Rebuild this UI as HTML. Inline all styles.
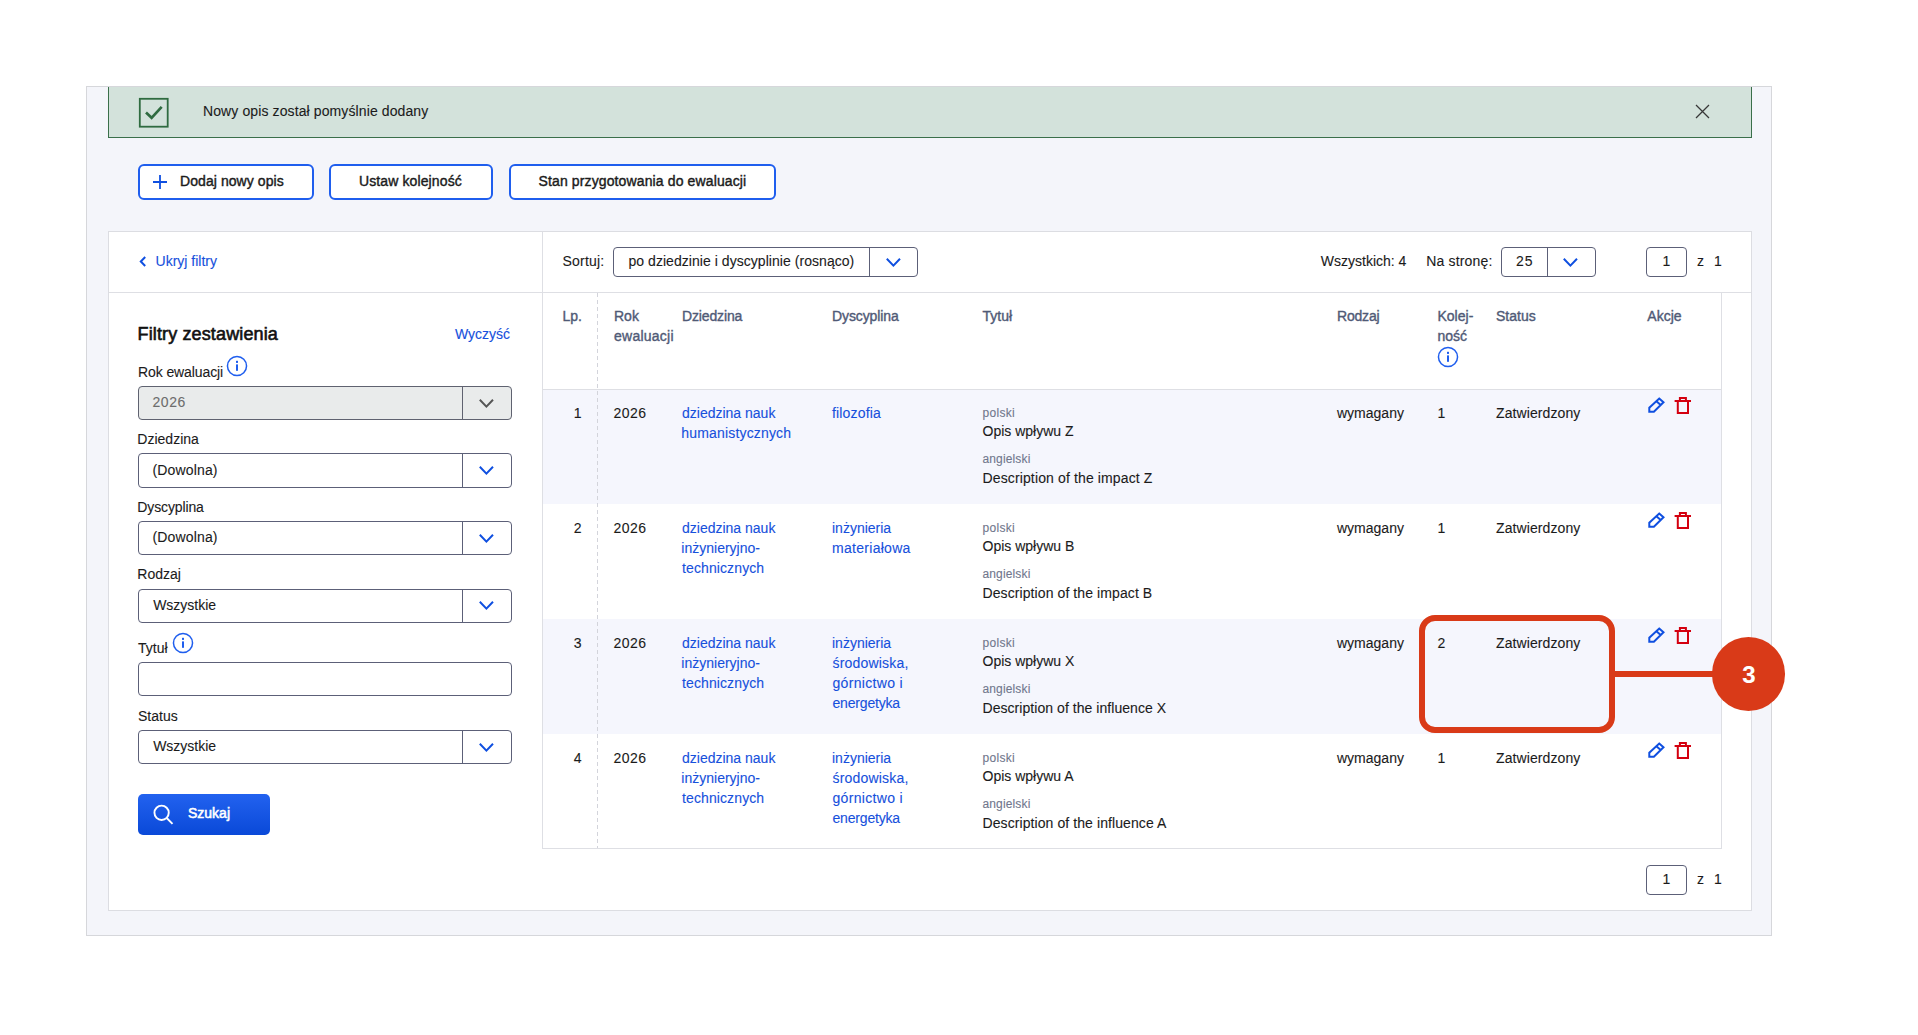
<!DOCTYPE html><html lang="pl"><head><meta charset="utf-8"><title>Opisy wpływu</title><style>
*{box-sizing:border-box;margin:0;padding:0}
html,body{width:1918px;height:1035px;background:#fff;overflow:hidden}
body{position:relative;font-family:"Liberation Sans",Arial,sans-serif;font-size:14px;line-height:20px;color:#1b1b1b}
.abs,.t{position:absolute}
.t{white-space:nowrap;line-height:20px;-webkit-text-stroke:0.1px currentColor}
a{color:#1650dc;text-decoration:none}
.frame{position:absolute;left:86px;top:86px;width:1686px;height:850px;background:#f4f5fa;border:1px solid #d6d7db;overflow:hidden}
.alert{position:absolute;left:108px;top:87px;width:1644px;height:51px;background:#d3e2db;border:1px solid #3a6f4a;border-top:0}
.btn{position:absolute;top:164px;height:36px;border:2px solid #1f5eee;border-radius:6px;background:#fff;font-weight:bold;color:#1b1b1b}
.panel{position:absolute;left:108px;top:231px;width:1644px;height:680px;background:#fff;border:1px solid #dcdde2}
.hline{position:absolute;height:1px;background:#dedfe4}
.vline{position:absolute;width:1px;background:#dedfe4}
.sel{position:absolute;border:1px solid #5c6078;border-radius:4px;background:#fff}
.sel .dv{position:absolute;top:0;bottom:0;width:1px;background:#5c6078}
.sel.dis{background:#e9ebeb;border-color:#5f6270;color:#6b6b6b}
.sel.dis .dv{background:#5f6270}
.lbl{color:#1b1b1b}
.blue{color:#1650dc}
.th{color:#505a76;-webkit-text-stroke:0.38px #505a76}
.md{-webkit-text-stroke:0.4px currentColor}
.sm{font-size:12px;line-height:16px;color:#70768c}
.row{position:absolute;left:543px;width:1178px}
.row.alt{background:#f5f6fd}
.ico{position:absolute;overflow:visible}
</style></head><body>
<div class="frame"></div>
<div class="alert" role="alert">
</div>
<svg class="ico" style="left:138px;top:96.5px" width="32" height="32" viewBox="0 0 32 32"><rect x="1.8" y="1.8" width="27.9" height="27.9" fill="none" stroke="#2f6b40" stroke-width="1.8"/><path d="M8 15.6 L13.6 20.8 L23.7 9.8" fill="none" stroke="#2f6b40" stroke-width="2.7"/></svg>
<span class="t " id="alerttxt" style="left:203.0px;top:101px;letter-spacing:0.109px;">Nowy opis został pomyślnie dodany</span>
<svg class="ico" style="left:1694px;top:103px" width="17" height="17" viewBox="0 0 17 17"><path d="M2 2 L15 15 M15 2 L2 15" stroke="#383838" stroke-width="1.25" fill="none"/></svg>
<button class="btn" style="left:138px;width:176px"></button>
<svg class="ico" style="left:152px;top:174px" width="16" height="16" viewBox="0 0 16 16"><path d="M8 1 V15 M1 8 H15" stroke="#0f4fe0" stroke-width="1.8" fill="none"/></svg>
<span class="t md" id="b1" style="left:180.0px;top:171px;letter-spacing:0.071px;">Dodaj nowy opis</span>
<button class="btn" style="left:329px;width:164px"></button>
<span class="t md" id="b2" style="left:359px;top:171px;letter-spacing:0.114px;">Ustaw kolejność</span>
<button class="btn" style="left:508.5px;width:267.5px"></button>
<span class="t md" id="b3" style="left:538.5px;top:171px;letter-spacing:0.127px;">Stan przygotowania do ewaluacji</span>
<div class="panel"></div>
<div class="hline" style="left:109px;top:292px;width:1642px"></div>
<div class="vline" style="left:542px;top:232px;height:617px"></div>
<svg class="ico" style="left:139px;top:256px" width="8" height="11" viewBox="0 0 8 11"><path d="M6.2 1 L1.8 5.5 L6.2 10" fill="none" stroke="#0f4fe0" stroke-width="2"/></svg>
<a class="t blue" id="ukryj" style="left:155.52px;top:251px;">Ukryj filtry</a>
<span class="t " id="filtry" style="left:137.52px;top:322px;letter-spacing:0.135px;font-size:18px;line-height:24px;-webkit-text-stroke:0.6px #111;color:#111;">Filtry zestawienia</span>
<a class="t blue" id="wyczysc" style="left:455px;top:324px;">Wyczyść</a>
<span class="t " id="l_rok" style="left:138px;top:361.5px;letter-spacing:-0.1px;">Rok ewaluacji</span>
<svg class="ico" style="left:226px;top:354.8px" width="22" height="22" viewBox="-11 -11 22 22"><circle cx="0" cy="0" r="9.55" fill="#fff" stroke="#1f5eee" stroke-width="1.5"/><rect x="-1" y="-1.6" width="2" height="6.4" fill="#1f5eee"/><rect x="-1" y="-5.2" width="2" height="2.1" fill="#1f5eee"/></svg>
<div class="sel dis" style="left:138px;top:386px;width:373.5px;height:34px"><span class="dv" style="left:323px"></span></div><span class="t " id="s_rok" style="left:152.5px;top:392.0px;letter-spacing:0.533px;color:#6d6d6d;">2026</span><svg class="ico" style="left:476.6px;top:396.7px" width="18.8" height="12.6" viewBox="-2 -2 18.8 12.6"><path d="M0.8 0.8 L7.4 7.6 L14.0 0.8" fill="none" stroke="#555" stroke-width="2.0" stroke-linecap="butt" stroke-linejoin="miter"/></svg>
<span class="t " id="l_dz" style="left:137.36px;top:429px;">Dziedzina</span>
<div class="sel" style="left:138px;top:453px;width:373.5px;height:35px"><span class="dv" style="left:323px"></span></div><span class="t " id="s_dz" style="left:152.5px;top:459.5px;letter-spacing:0.15px;">(Dowolna)</span><svg class="ico" style="left:476.6px;top:464.2px" width="18.8" height="12.6" viewBox="-2 -2 18.8 12.6"><path d="M0.8 0.8 L7.4 7.6 L14.0 0.8" fill="none" stroke="#0f4fe0" stroke-width="2.0" stroke-linecap="butt" stroke-linejoin="miter"/></svg>
<span class="t " id="l_dy" style="left:137.36px;top:496.5px;letter-spacing:-0.133px;">Dyscyplina</span>
<div class="sel" style="left:138px;top:521px;width:373.5px;height:34px"><span class="dv" style="left:323px"></span></div><span class="t " id="s_dy" style="left:152.5px;top:527.0px;letter-spacing:0.15px;">(Dowolna)</span><svg class="ico" style="left:476.6px;top:531.7px" width="18.8" height="12.6" viewBox="-2 -2 18.8 12.6"><path d="M0.8 0.8 L7.4 7.6 L14.0 0.8" fill="none" stroke="#0f4fe0" stroke-width="2.0" stroke-linecap="butt" stroke-linejoin="miter"/></svg>
<span class="t " id="l_ro" style="left:137.36px;top:564px;">Rodzaj</span>
<div class="sel" style="left:138px;top:588.5px;width:373.5px;height:34px"><span class="dv" style="left:323px"></span></div><span class="t " id="s_ro" style="left:153.14px;top:594.5px;">Wszystkie</span><svg class="ico" style="left:476.6px;top:599.2px" width="18.8" height="12.6" viewBox="-2 -2 18.8 12.6"><path d="M0.8 0.8 L7.4 7.6 L14.0 0.8" fill="none" stroke="#0f4fe0" stroke-width="2.0" stroke-linecap="butt" stroke-linejoin="miter"/></svg>
<span class="t " id="l_ty" style="left:138px;top:638px;">Tytuł</span>
<svg class="ico" style="left:171.7px;top:632px" width="22" height="22" viewBox="-11 -11 22 22"><circle cx="0" cy="0" r="9.55" fill="#fff" stroke="#1f5eee" stroke-width="1.5"/><rect x="-1" y="-1.6" width="2" height="6.4" fill="#1f5eee"/><rect x="-1" y="-5.2" width="2" height="2.1" fill="#1f5eee"/></svg>
<div class="sel" style="left:138px;top:662px;width:373.5px;height:34px"></div>
<span class="t " id="l_st" style="left:138px;top:705.5px;">Status</span>
<div class="sel" style="left:138px;top:730px;width:373.5px;height:34px"><span class="dv" style="left:323px"></span></div><span class="t " id="s_st" style="left:153.14px;top:736.0px;">Wszystkie</span><svg class="ico" style="left:476.6px;top:740.7px" width="18.8" height="12.6" viewBox="-2 -2 18.8 12.6"><path d="M0.8 0.8 L7.4 7.6 L14.0 0.8" fill="none" stroke="#0f4fe0" stroke-width="2.0" stroke-linecap="butt" stroke-linejoin="miter"/></svg>
<button class="abs" style="left:138px;top:794px;width:132px;height:41px;border:0;border-radius:5px;background:linear-gradient(#2262ef,#0a49d8)"></button>
<svg class="ico" style="left:152px;top:802px" width="24" height="24" viewBox="0 0 24 24"><circle cx="9.6" cy="10.8" r="7.15" fill="none" stroke="#fff" stroke-width="1.9"/><path d="M14.7 16 L20.5 21.8" stroke="#fff" stroke-width="1.9" fill="none"/></svg>
<span class="t " id="szukaj" style="left:188px;top:803px;color:#fff;-webkit-text-stroke:0.55px #fff;">Szukaj</span>
<span class="t " id="sortuj" style="left:562.5px;top:251px;letter-spacing:0.2px;">Sortuj:</span>
<div class="sel" style="left:613px;top:247px;width:305px;height:30px"><span class="dv" style="left:255px"></span></div>
<span class="t " id="sortv" style="left:628.48px;top:251px;letter-spacing:0.047px;">po dziedzinie i dyscyplinie (rosnąco)</span>
<svg class="ico" style="left:883.6px;top:255.7px" width="18.8" height="12.6" viewBox="-2 -2 18.8 12.6"><path d="M0.8 0.8 L7.4 7.6 L14.0 0.8" fill="none" stroke="#0f4fe0" stroke-width="2.0" stroke-linecap="butt" stroke-linejoin="miter"/></svg>
<span class="t " id="wszystkich" style="left:1320.8px;top:251px;">Wszystkich: 4</span>
<span class="t " id="nastrone" style="left:1426.2px;top:251px;letter-spacing:0.167px;">Na stronę:</span>
<div class="sel" style="left:1501px;top:247px;width:95px;height:30px"><span class="dv" style="left:44.5px"></span></div>
<span class="t " id="v25" style="left:1516px;top:251px;letter-spacing:1.0px;">25</span>
<svg class="ico" style="left:1561.1px;top:255.7px" width="18.8" height="12.6" viewBox="-2 -2 18.8 12.6"><path d="M0.8 0.8 L7.4 7.6 L14.0 0.8" fill="none" stroke="#0f4fe0" stroke-width="2.0" stroke-linecap="butt" stroke-linejoin="miter"/></svg>
<div class="sel" style="left:1646px;top:247px;width:41px;height:30px"></div><span class="t " id="pg1" style="left:1662.5px;top:251px;">1</span><span class="t " id="pgz" style="left:1697px;top:251px;">z</span><span class="t " id="pgn" style="left:1714px;top:251px;">1</span>
<div class="vline" style="left:1721px;top:293px;height:556px"></div>
<div class="hline" style="left:543px;top:389px;width:1178px"></div>
<div class="hline" style="left:543px;top:848px;width:1179px"></div>
<span class="t th" id="h_lp" style="left:562.5px;top:306px;">Lp.</span>
<span class="t th" id="h_rok" style="left:614px;top:306px;">Rok</span>
<span class="t th" id="h_ew" style="left:614px;top:326px;letter-spacing:0.25px;">ewaluacji</span>
<span class="t th" id="h_dz" style="left:682.02px;top:306px;letter-spacing:-0.138px;">Dziedzina</span>
<span class="t th" id="h_dy" style="left:832.02px;top:306px;letter-spacing:-0.111px;">Dyscyplina</span>
<span class="t th" id="h_ty" style="left:982.5px;top:306px;">Tytuł</span>
<span class="t th" id="h_ro" style="left:1337px;top:306px;letter-spacing:-0.2px;">Rodzaj</span>
<span class="t th" id="h_ko" style="left:1437.5px;top:306px;">Kolej-</span>
<span class="t th" id="h_no" style="left:1437.5px;top:326px;">ność</span>
<span class="t th" id="h_st" style="left:1496px;top:306px;">Status</span>
<span class="t th" id="h_ak" style="left:1647.3px;top:306px;">Akcje</span>
<svg class="ico" style="left:1436.6px;top:346.4px" width="22" height="22" viewBox="-11 -11 22 22"><circle cx="0" cy="0" r="9.55" fill="#fff" stroke="#1f5eee" stroke-width="1.5"/><rect x="-1" y="-1.6" width="2" height="6.4" fill="#1f5eee"/><rect x="-1" y="-5.2" width="2" height="2.1" fill="#1f5eee"/></svg>
<div class="row alt" style="top:390px;height:114px"></div>
<span class="t " id="r1lp" style="left:573.7px;top:403px;">1</span>
<span class="t " id="r1rok" style="left:613.5px;top:403px;letter-spacing:0.467px;">2026</span>
<a class="t blue" id="r1dz0" style="left:682px;top:403px;">dziedzina nauk</a>
<a class="t blue" id="r1dz1" style="left:681.36px;top:423px;letter-spacing:0.164px;">humanistycznych</a>
<a class="t blue" id="r1dy0" style="left:832px;top:403px;letter-spacing:0.162px;">filozofia</a>
<span class="t sm" id="r1pl" style="left:982.5px;top:405px;letter-spacing:0.3px;font-size:12px;line-height:16px;">polski</span>
<span class="t " id="r1plt" style="left:982.5px;top:421px;">Opis wpływu Z</span>
<span class="t sm" id="r1en" style="left:982.5px;top:451px;letter-spacing:0.138px;font-size:12px;line-height:16px;">angielski</span>
<span class="t " id="r1ent" style="left:982.5px;top:467.5px;letter-spacing:0.131px;">Description of the impact Z</span>
<span class="t " id="r1ro" style="left:1337px;top:403px;">wymagany</span>
<span class="t " id="r1ko" style="left:1437.5px;top:403px;">1</span>
<span class="t " id="r1st" style="left:1496px;top:403px;letter-spacing:0.091px;">Zatwierdzony</span>
<svg class="ico" style="left:1647.7px;top:397.0px" width="18" height="17" viewBox="0 0 18 17"><path d="M11.2 1.5 L15.5 5.3 L5.9 14.7 H1.3 V10.7 Z M8.4 4.2 L12.7 8" fill="none" stroke="#0f4fe0" stroke-width="2" stroke-linejoin="miter"/></svg>
<svg class="ico" style="left:1674px;top:397.0px" width="18" height="18" viewBox="0 0 18 18"><path d="M5.9 3.2 V1 H11.9 V3.2 M0.6 4.1 H17 M3.8 5 V16.1 H14 V5" fill="none" stroke="#d4000f" stroke-width="2" stroke-linejoin="miter"/></svg>
<div class="row" style="top:504px;height:115px"></div>
<span class="t " id="r2lp" style="left:573.7px;top:518px;">2</span>
<span class="t " id="r2rok" style="left:613.5px;top:518px;letter-spacing:0.467px;">2026</span>
<a class="t blue" id="r2dz0" style="left:682px;top:518px;">dziedzina nauk</a>
<a class="t blue" id="r2dz1" style="left:681.36px;top:538px;">inżynieryjno-</a>
<a class="t blue" id="r2dz2" style="left:682px;top:558px;letter-spacing:0.109px;">technicznych</a>
<a class="t blue" id="r2dy0" style="left:832px;top:518px;">inżynieria</a>
<a class="t blue" id="r2dy1" style="left:832px;top:538px;letter-spacing:0.29px;">materiałowa</a>
<span class="t sm" id="r2pl" style="left:982.5px;top:520px;letter-spacing:0.3px;font-size:12px;line-height:16px;">polski</span>
<span class="t " id="r2plt" style="left:982.5px;top:536px;">Opis wpływu B</span>
<span class="t sm" id="r2en" style="left:982.5px;top:566px;letter-spacing:0.138px;font-size:12px;line-height:16px;">angielski</span>
<span class="t " id="r2ent" style="left:982.5px;top:582.5px;letter-spacing:0.092px;">Description of the impact B</span>
<span class="t " id="r2ro" style="left:1337px;top:518px;">wymagany</span>
<span class="t " id="r2ko" style="left:1437.5px;top:518px;">1</span>
<span class="t " id="r2st" style="left:1496px;top:518px;letter-spacing:0.091px;">Zatwierdzony</span>
<svg class="ico" style="left:1647.7px;top:511.99999999999994px" width="18" height="17" viewBox="0 0 18 17"><path d="M11.2 1.5 L15.5 5.3 L5.9 14.7 H1.3 V10.7 Z M8.4 4.2 L12.7 8" fill="none" stroke="#0f4fe0" stroke-width="2" stroke-linejoin="miter"/></svg>
<svg class="ico" style="left:1674px;top:511.99999999999994px" width="18" height="18" viewBox="0 0 18 18"><path d="M5.9 3.2 V1 H11.9 V3.2 M0.6 4.1 H17 M3.8 5 V16.1 H14 V5" fill="none" stroke="#d4000f" stroke-width="2" stroke-linejoin="miter"/></svg>
<div class="row alt" style="top:619px;height:115px"></div>
<span class="t " id="r3lp" style="left:573.7px;top:633px;">3</span>
<span class="t " id="r3rok" style="left:613.5px;top:633px;letter-spacing:0.467px;">2026</span>
<a class="t blue" id="r3dz0" style="left:682px;top:633px;">dziedzina nauk</a>
<a class="t blue" id="r3dz1" style="left:681.36px;top:653px;">inżynieryjno-</a>
<a class="t blue" id="r3dz2" style="left:682px;top:673px;letter-spacing:0.109px;">technicznych</a>
<a class="t blue" id="r3dy0" style="left:832px;top:633px;">inżynieria</a>
<a class="t blue" id="r3dy1" style="left:832.48px;top:653px;letter-spacing:0.2px;">środowiska,</a>
<a class="t blue" id="r3dy2" style="left:832.48px;top:673px;letter-spacing:0.33px;">górnictwo i</a>
<a class="t blue" id="r3dy3" style="left:832.48px;top:693px;letter-spacing:-0.178px;">energetyka</a>
<span class="t sm" id="r3pl" style="left:982.5px;top:635px;letter-spacing:0.3px;font-size:12px;line-height:16px;">polski</span>
<span class="t " id="r3plt" style="left:982.5px;top:651px;">Opis wpływu X</span>
<span class="t sm" id="r3en" style="left:982.5px;top:681px;letter-spacing:0.138px;font-size:12px;line-height:16px;">angielski</span>
<span class="t " id="r3ent" style="left:982.5px;top:697.5px;letter-spacing:0.052px;">Description of the influence X</span>
<span class="t " id="r3ro" style="left:1337px;top:633px;">wymagany</span>
<span class="t " id="r3ko" style="left:1437.5px;top:633px;">2</span>
<span class="t " id="r3st" style="left:1496px;top:633px;letter-spacing:0.091px;">Zatwierdzony</span>
<svg class="ico" style="left:1647.7px;top:627.0px" width="18" height="17" viewBox="0 0 18 17"><path d="M11.2 1.5 L15.5 5.3 L5.9 14.7 H1.3 V10.7 Z M8.4 4.2 L12.7 8" fill="none" stroke="#0f4fe0" stroke-width="2" stroke-linejoin="miter"/></svg>
<svg class="ico" style="left:1674px;top:627.0px" width="18" height="18" viewBox="0 0 18 18"><path d="M5.9 3.2 V1 H11.9 V3.2 M0.6 4.1 H17 M3.8 5 V16.1 H14 V5" fill="none" stroke="#d4000f" stroke-width="2" stroke-linejoin="miter"/></svg>
<div class="row" style="top:734px;height:114px"></div>
<span class="t " id="r4lp" style="left:573.7px;top:748px;">4</span>
<span class="t " id="r4rok" style="left:613.5px;top:748px;letter-spacing:0.467px;">2026</span>
<a class="t blue" id="r4dz0" style="left:682px;top:748px;">dziedzina nauk</a>
<a class="t blue" id="r4dz1" style="left:681.36px;top:768px;">inżynieryjno-</a>
<a class="t blue" id="r4dz2" style="left:682px;top:788px;letter-spacing:0.109px;">technicznych</a>
<a class="t blue" id="r4dy0" style="left:832px;top:748px;">inżynieria</a>
<a class="t blue" id="r4dy1" style="left:832.48px;top:768px;letter-spacing:0.2px;">środowiska,</a>
<a class="t blue" id="r4dy2" style="left:832.48px;top:788px;letter-spacing:0.33px;">górnictwo i</a>
<a class="t blue" id="r4dy3" style="left:832.48px;top:808px;letter-spacing:-0.178px;">energetyka</a>
<span class="t sm" id="r4pl" style="left:982.5px;top:750px;letter-spacing:0.3px;font-size:12px;line-height:16px;">polski</span>
<span class="t " id="r4plt" style="left:982.5px;top:766px;">Opis wpływu A</span>
<span class="t sm" id="r4en" style="left:982.5px;top:796px;letter-spacing:0.138px;font-size:12px;line-height:16px;">angielski</span>
<span class="t " id="r4ent" style="left:982.5px;top:812.5px;letter-spacing:0.086px;">Description of the influence A</span>
<span class="t " id="r4ro" style="left:1337px;top:748px;">wymagany</span>
<span class="t " id="r4ko" style="left:1437.5px;top:748px;">1</span>
<span class="t " id="r4st" style="left:1496px;top:748px;letter-spacing:0.091px;">Zatwierdzony</span>
<svg class="ico" style="left:1647.7px;top:742.0px" width="18" height="17" viewBox="0 0 18 17"><path d="M11.2 1.5 L15.5 5.3 L5.9 14.7 H1.3 V10.7 Z M8.4 4.2 L12.7 8" fill="none" stroke="#0f4fe0" stroke-width="2" stroke-linejoin="miter"/></svg>
<svg class="ico" style="left:1674px;top:742.0px" width="18" height="18" viewBox="0 0 18 18"><path d="M5.9 3.2 V1 H11.9 V3.2 M0.6 4.1 H17 M3.8 5 V16.1 H14 V5" fill="none" stroke="#d4000f" stroke-width="2" stroke-linejoin="miter"/></svg>
<div class="abs" style="left:597px;top:293px;width:1px;height:555px;background:repeating-linear-gradient(to bottom,#d3d4db 0,#d3d4db 4px,transparent 4px,transparent 7px)"></div>
<div class="sel" style="left:1646px;top:865px;width:41px;height:30px"></div><span class="t " id="pb1" style="left:1662.5px;top:869px;">1</span><span class="t " id="pbz" style="left:1697px;top:869px;">z</span><span class="t " id="pbn" style="left:1714px;top:869px;">1</span>
<div class="abs" style="left:1419px;top:615px;width:196px;height:118px;border:6px solid #d93a18;border-radius:16px"></div>
<div class="abs" style="left:1614px;top:670.5px;width:110px;height:6.2px;background:#d93a18"></div>
<div class="abs" style="left:1712.2px;top:637.1px;width:73.3px;height:73.5px;border-radius:50%;background:#d93a18"></div>
<span class="t" id="c3" style="left:1742.2px;top:661px;font-weight:bold;font-size:24px;line-height:28px;color:#fff">3</span>
</body></html>
